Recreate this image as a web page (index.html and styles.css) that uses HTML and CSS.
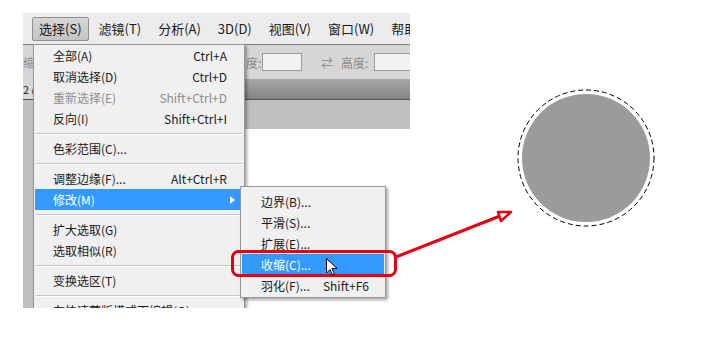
FILE: index.html
```html
<!DOCTYPE html>
<html lang="zh-CN">
  <head>
    <meta charset="UTF-8" />
    <meta name="viewport" content="width=device-width, initial-scale=1.0" />
    <title>选择 - 修改 - 收缩</title>
    <link rel="stylesheet" href="styles.css">
  </head>
  <body>
    <div class="ps">
      <div class="menubar">
        <span class="mb-item open">选择(S)</span>
        <span class="mb-item">滤镜(T)</span>
        <span class="mb-item">分析(A)</span>
        <span class="mb-item">3D(D)</span>
        <span class="mb-item">视图(V)</span>
        <span class="mb-item">窗口(W)</span>
        <span class="mb-item">帮助(H)</span>
      </div>

      <div class="options">
        <span class="opt-label first">缩</span>
        <span class="opt-label width">度:</span>
        <span class="opt-input"></span>
        <span class="opt-swap">⇄</span>
        <span class="opt-label height">高度:</span>
        <span class="opt-input wide"></span>
      </div>

      <div class="docbar">
        <span class="doctab">2 @</span>
      </div>

      <div class="work">
        <div class="canvas"></div>
      </div>

      <div class="menu">
        <div class="item"><span>全部(A)</span><span>Ctrl+A</span></div>
        <div class="item"><span>取消选择(D)</span><span>Ctrl+D</span></div>
        <div class="item disabled"><span>重新选择(E)</span><span>Shift+Ctrl+D</span></div>
        <div class="item"><span>反向(I)</span><span>Shift+Ctrl+I</span></div>
        <div class="sep"></div>
        <div class="item"><span>色彩范围(C)...</span></div>
        <div class="sep"></div>
        <div class="item"><span>调整边缘(F)...</span><span>Alt+Ctrl+R</span></div>
        <div class="item active has-sub"><span>修改(M)</span><span class="arrow"></span></div>
        <div class="sep"></div>
        <div class="item"><span>扩大选取(G)</span></div>
        <div class="item"><span>选取相似(R)</span></div>
        <div class="sep"></div>
        <div class="item"><span>变换选区(T)</span></div>
        <div class="sep"></div>
        <div class="item"><span>在快速蒙版模式下编辑(Q)</span></div>
      </div>

      <div class="submenu">
        <div class="item"><span>边界(B)...</span></div>
        <div class="item"><span>平滑(S)...</span></div>
        <div class="item"><span>扩展(E)...</span></div>
        <div class="item active"><span>收缩(C)...</span></div>
        <div class="item"><span>羽化(F)...</span><span>Shift+F6</span></div>
      </div>
    </div>

    <svg class="overlay" width="715" height="337" viewBox="0 0 715 337">
      <!-- selection circle on the canvas -->
      <circle cx="586" cy="158" r="64" fill="#9b9b9b" />
      <circle cx="586" cy="158" r="68" fill="none" stroke="#000" stroke-width="1" stroke-dasharray="5 3" />

      <!-- red annotation -->
      <rect x="232.5" y="251.5" width="163" height="24" rx="6" fill="none" stroke="#e60012" stroke-width="3" />
      <line x1="396" y1="257" x2="500" y2="216" stroke="#e60012" stroke-width="3" />
      <polygon points="511,212 498,212 501,221" fill="#fff" stroke="#e60012" stroke-width="2.5" stroke-linejoin="round" />

      <!-- mouse pointer -->
      <path d="M326.5 258.5 L326.5 273 L330 269.5 L332.5 275 L334.5 274 L332 268.5 L337 268.5 Z" fill="#fff" stroke="#000" stroke-width="1" stroke-linejoin="round" />
    </svg>
  </body>
</html>
```

FILE: styles.css
```css
* {
  box-sizing: border-box;
}
body {
  margin: 0;
  padding: 13px 0 0 23px;
  width: 715px;
  height: 337px;
  overflow: hidden;
  position: relative;
  background: #fff;
  font-family: "Noto Sans CJK SC", "Noto Sans", sans-serif;
  color: #1a1a1a;
}

.ps {
  position: relative;
  width: 387px;
  height: 295px;
  overflow: hidden;
  display: flex;
  flex-direction: column;
}

.menubar {
  height: 32px;
  background: #ececec;
  border-bottom: 1px solid #7e7e7e;
  display: flex;
  align-items: center;
  padding: 1px 0 0 9px;
  gap: 3px;
  font-size: 13px;
  white-space: nowrap;
  overflow: hidden;
}

.mb-item {
  flex-shrink: 0;
  height: 24px;
  line-height: 22px;
  padding: 0 6px;
  border: 1px solid transparent;
}

.mb-item.open {
  background: linear-gradient(#d6d6d6, #c4c4c4);
  border-color: #8f8f8f;
  border-radius: 2px;
}

.options {
  height: 34px;
  background: #d6d6d6;
  display: flex;
  align-items: center;
  font-size: 12px;
  color: #8c8c8c;
  white-space: nowrap;
  overflow: hidden;
}

.options > span {
  flex-shrink: 0;
}

.opt-label.first {
  width: 10px;
  overflow: hidden;
}
.opt-label.width {
  margin-left: 213px;
  width: 16px;
}
.opt-label.height {
  margin-left: 8px;
  width: 28px;
}

.opt-input {
  width: 40px;
  height: 18px;
  background: #f2f2f2;
  border: 1px solid #9c9c9c;
}
.opt-input.wide {
  width: 60px;
  margin-left: 5px;
}

.opt-swap {
  margin-left: 19px;
  width: 12px;
  font-size: 12px;
  color: #8a8a8a;
}

.docbar {
  height: 21px;
  background: linear-gradient(#a8a8a8, #838383);
  border-bottom: 1px solid #4f4f4f;
  display: flex;
}

.doctab {
  width: 10px;
  overflow: hidden;
  background: #d8d8d8;
  font-size: 11px;
  line-height: 20px;
  color: #222;
  white-space: nowrap;
}

.work {
  flex: 1;
  display: flex;
  padding: 29px 0 0 10px;
  background: #c0c0c0;
}

.canvas {
  flex: 1;
  background: #fff;
}

.menu,
.submenu {
  position: absolute;
  background: #f0f0f0;
  border: 1px solid #979797;
  box-shadow: 2px 2px 3px rgba(0, 0, 0, 0.35);
  font-size: 12px;
  white-space: nowrap;
}

.menu {
  left: 10px;
  top: 31px;
  width: 212px;
  padding: 0 0 0 1px;
}

.submenu {
  left: 217px;
  top: 173px;
  width: 146px;
  padding: 4px 0 1px 0;
}

.item {
  height: 21px;
  line-height: 21px;
  display: flex;
  justify-content: space-between;
  align-items: center;
  padding: 0 16px 0 18px;
  margin-right: 1px;
}

.submenu .item {
  padding: 0 15px 0 19px;
  margin-left: 1px;
}

.item.disabled {
  color: #8d8d8d;
}

.item.active {
  background: #3399ff;
  color: #fff;
}

.arrow {
  width: 0;
  height: 0;
  margin-right: -8px;
  border-top: 4px solid transparent;
  border-bottom: 4px solid transparent;
  border-left: 5px solid #fff;
}

.sep {
  height: 2px;
  margin: 4px 2px 3px 1px;
  background: #c5c5c5;
  border-bottom: 1px solid #fff;
}

.overlay {
  position: absolute;
  left: 0;
  top: 0;
  pointer-events: none;
}
```
